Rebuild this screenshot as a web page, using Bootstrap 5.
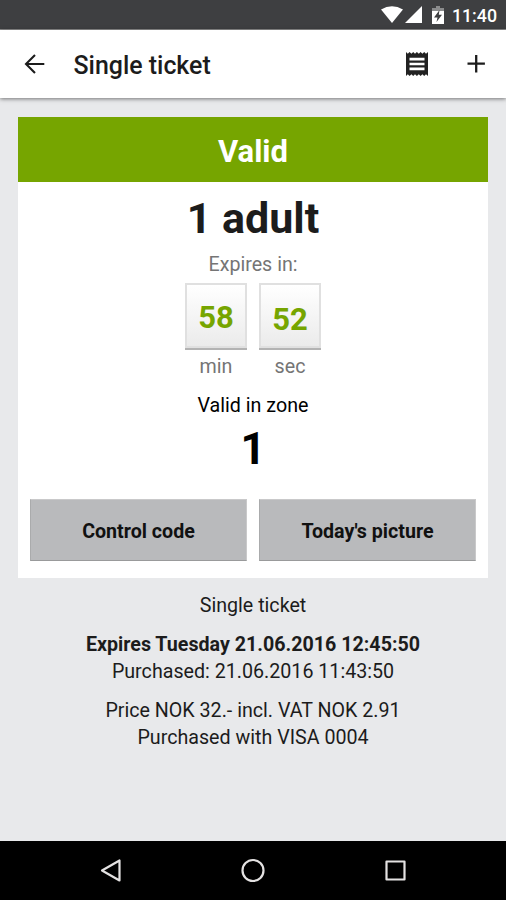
<!DOCTYPE html>
<html lang="en">
<head>
    <meta charset="UTF-8">
    <meta name="viewport" content="width=device-width, initial-scale=1.0">
    <title>Single ticket</title>
    <link rel="stylesheet" href="https://cdn.jsdelivr.net/npm/bootstrap@5.3.0/dist/css/bootstrap.min.css">
    <style>
        body {
            font-family: Roboto, "Liberation Sans", sans-serif;
            background-color: #e8e9eb;
            color: #1c1c1c;
            font-size: 19.67px;
            line-height: 27px;
        }
        svg {
            display: block;
            flex: none;
        }
        .status-bar {
            height: 30px;
            background-color: #3e3f41;
            border-bottom: 1px solid #8c8c8c;
            padding-right: 9px;
            font-size: 17.8px;
            font-weight: 500;
        }
        .status-time {
            padding-top: 2px;
        }
        .signal-icon {
            margin-left: 2px;
        }
        .battery-icon {
            margin: 0 8px 0 10px;
        }
        .app-bar {
            height: 68px;
            padding: 0 20px 0 22px;
            box-shadow: 0 1px 4px rgba(0, 0, 0, 0.5);
        }
        .app-title {
            font-size: 24.9px;
            font-weight: 500;
            margin: 2px 0 0 26.5px;
        }
        .plus-icon {
            margin-left: 37px;
        }
        .ticket {
            margin: 19px 18px 0;
            height: 461px;
        }
        .valid-banner {
            height: 65px;
            background-color: #76a500;
            font-size: 31px;
            padding-top: 3px;
        }
        .passenger {
            font-size: 43px;
            line-height: 48px;
            margin-top: 12px;
        }
        .muted-text {
            color: #757575;
        }
        .expires-label {
            margin-top: 9px;
        }
        .timer {
            gap: 12px;
            margin-top: 5px;
        }
        .time-box {
            width: 62px;
            height: 65px;
            border: 2px solid #e0e0e0;
            box-shadow: 0 2px 0 #b3b3b3;
            background: linear-gradient(#ffffff, #ebebeb);
            color: #76a500;
            font-size: 31px;
            padding-top: 4px;
            margin-bottom: 5px;
        }
        .time-box-sec {
            padding-top: 8px;
        }
        .zone-label {
            margin-top: 12px;
        }
        .zone {
            font-size: 44px;
            line-height: 52px;
            margin-top: 4px;
        }
        .ticket-actions {
            gap: 12px;
            padding: 0 12px;
            margin-top: 24px;
        }
        .btn-ticket {
            height: 62px;
            border: 1px solid #aaabac;
            border-top-color: #c9c9ca;
            border-right-color: #c9c9ca;
            border-bottom-color: #999a9b;
            border-radius: 0;
            background-color: #b9babc;
            color: #111;
            font-size: 19.67px;
            font-weight: 700;
            padding-top: 9px;
        }
        .details {
            margin-top: 14px;
        }
        .details p {
            margin-bottom: 12px;
        }
        .nav-bar {
            height: 59px;
            background-color: #000;
        }
    </style>
</head>
<body>
    <div class="d-flex flex-column vh-100 overflow-hidden">
        <div class="status-bar d-flex justify-content-end align-items-center text-white">
            <svg width="22" height="17" viewBox="0 0 22 17" fill="#fff"><path d="M0 3.6Q11-3.2 22 3.6L11 17Z"/></svg>
            <svg class="signal-icon" width="17" height="17" viewBox="0 0 17 17" fill="#fff"><path d="M17 0V17H0Z"/></svg>
            <svg class="battery-icon" width="12" height="18" viewBox="0 0 12 18">
                <path d="M4 0H8V2H12V6H0V2H4Z" fill="#8b8c8d"/>
                <path d="M0 5H12V18H0Z" fill="#fff"/>
                <path d="M7.5 4L2 11.5H5.5L4.5 16L10 8.8H6.8Z" fill="#3e3f41"/>
            </svg>
            <span class="status-time">11:40</span>
        </div>

        <div class="app-bar d-flex align-items-center bg-white">
            <svg width="25" height="25" viewBox="0 0 25 25" fill="none" stroke="#1c1c1c" stroke-width="2.1"><path d="M22.3 12H4.5M13 3L4 12L13 21"/></svg>
            <span class="app-title">Single ticket</span>
            <svg class="ms-auto" width="24" height="26" viewBox="0 0 24 26">
                <path d="M1 1L2.8 2.8L4.6 1L6.4 2.8L8.2 1L10 2.8L11.9 1L13.8 2.8L15.6 1L17.4 2.8L19.2 1L21 2.8L23 1V25L21 23.2L19.2 25L17.4 23.2L15.6 25L13.8 23.2L11.9 25L10 23.2L8.2 25L6.4 23.2L4.6 25L2.8 23.2L1 25Z" fill="#222"/>
                <path d="M4.5 8.2H19.5M4.5 13H19.5M4.5 17.8H19.5" stroke="#fff" stroke-width="2.7"/>
            </svg>
            <svg class="plus-icon" width="20" height="20" viewBox="0 0 20 20" stroke="#1c1c1c" stroke-width="2.3"><path d="M10.2 1V18.4M1.5 9.7H18.9"/></svg>
        </div>

        <div class="ticket bg-white text-center flex-shrink-0">
            <div class="valid-banner d-flex align-items-center justify-content-center text-white fw-bold">Valid</div>
            <div class="passenger fw-bold">1 adult</div>
            <div class="expires-label muted-text">Expires in:</div>
            <div class="timer d-flex justify-content-center muted-text">
                <div>
                    <div class="time-box d-flex align-items-center justify-content-center fw-bold">58</div>
                    <div>min</div>
                </div>
                <div>
                    <div class="time-box time-box-sec d-flex align-items-center justify-content-center fw-bold">52</div>
                    <div>sec</div>
                </div>
            </div>
            <div class="zone-label text-black">Valid in zone</div>
            <div class="zone fw-bold text-black">1</div>
            <div class="ticket-actions d-flex">
                <button type="button" class="btn btn-ticket flex-fill w-50">Control code</button>
                <button type="button" class="btn btn-ticket flex-fill w-50">Today's picture</button>
            </div>
        </div>

        <div class="details text-center">
            <p>Single ticket</p>
            <p><b>Expires Tuesday 21.06.2016 12:45:50</b><br>Purchased: 21.06.2016 11:43:50</p>
            <p>Price NOK 32.- incl. VAT NOK 2.91<br>Purchased with VISA 0004</p>
        </div>

        <div class="nav-bar mt-auto d-flex align-items-center justify-content-center flex-shrink-0">
            <svg width="330" height="26" viewBox="0 0 330 26" fill="none" stroke="#e4e2e2" stroke-width="2.2" stroke-linejoin="round">
                <path d="M31.5 2.5V22.5L14 12.5Z"/>
                <circle cx="165" cy="12.5" r="10.5"/>
                <rect x="298.5" y="3.5" width="18" height="18"/>
            </svg>
        </div>
    </div>
    <script src="https://cdn.jsdelivr.net/npm/bootstrap@5.3.0/dist/js/bootstrap.bundle.min.js"></script>
</body>
</html>
